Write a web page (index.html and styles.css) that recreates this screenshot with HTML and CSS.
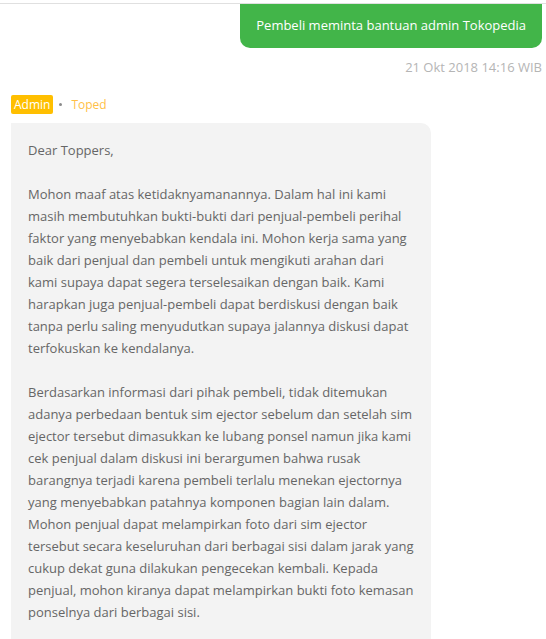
FILE: index.html
```html
<!DOCTYPE html>
<html>
	<head>
		<meta name="viewport" content="width=device-width, initial-scale=1.0">
		<title>Diskusi</title>
		<link rel="stylesheet" href="styles.css">
	</head>
	<body>
	<div class="top_line"></div>
	<div class="chat">
		<div class="msg_right">
			<div class="green_bubble">Pembeli meminta bantuan admin Tokopedia</div>
			<div class="time">21 Okt 2018 14:16 WIB</div>
		</div>

		<div class="msg_left">
			<div class="sender">
				<span class="badge">Admin</span>
				<span class="dot"></span>
				<span class="sender_name">Toped</span>
			</div>
			<div class="gray_bubble">
				<p>Dear Toppers,</p>
				<p>Mohon maaf atas ketidaknyamanannya. Dalam hal ini kami masih membutuhkan bukti-bukti dari penjual-pembeli perihal faktor yang menyebabkan kendala ini. Mohon kerja sama yang baik dari penjual dan pembeli untuk mengikuti arahan dari kami supaya dapat segera terselesaikan dengan baik. Kami harapkan juga penjual-pembeli dapat berdiskusi dengan baik tanpa perlu saling menyudutkan supaya jalannya diskusi dapat terfokuskan ke kendalanya.</p>
				<p>Berdasarkan informasi dari pihak pembeli, tidak ditemukan adanya perbedaan bentuk sim ejector sebelum dan setelah sim ejector tersebut dimasukkan ke lubang ponsel namun jika kami cek penjual dalam diskusi ini berargumen bahwa rusak barangnya terjadi karena pembeli terlalu menekan ejectornya yang menyebabkan patahnya komponen bagian lain dalam. Mohon penjual dapat melampirkan foto dari sim ejector tersebut secara keseluruhan dari berbagai sisi dalam jarak yang cukup dekat guna dilakukan pengecekan kembali. Kepada penjual, mohon kiranya dapat melampirkan bukti foto kemasan ponselnya dari berbagai sisi.</p>
			</div>
		</div>
	</div>
	</body>
</html>
```
FILE: styles.css
```css
	body
	{
		margin: 0;
		font-family: 'Open Sans', sans-serif;
		background: #ffffff;
	}
	.top_line
	{
		margin-top: 3px;
		height: 1px;
		background: #e0e0e0;
	}
	.chat
	{
		padding: 0 4px 0 11px;
	}
	.msg_right
	{
		display: flex;
		flex-direction: column;
		align-items: flex-end;
	}
	.green_bubble
	{
		background-color: #42b549;
		color: white;
		font-size: 13px;
		line-height: 20px;
		padding: 11px 16px 13px 16px;
		border-radius: 0 0 10px 10px;
	}
	.time
	{
		color: #b5b5b5;
		font-size: 13px;
		margin-top: 10px;
		line-height: 18px;
	}
	.msg_left
	{
		margin-top: 19px;
	}
	.sender
	{
		display: flex;
		align-items: center;
		font-size: 12px;
	}
	.badge
	{
		background-color: #ffbf00;
		color: white;
		padding: 0 3px;
		line-height: 19px;
		border-radius: 2px;
	}
	.dot
	{
		width: 3px;
		height: 3px;
		border-radius: 50%;
		background: #8a8a8a;
		margin: 0 9px 0 6px;
	}
	.sender_name
	{
		color: #ffbf47;
	}
	.gray_bubble
	{
		margin-top: 9px;
		width: 420px;
		box-sizing: border-box;
		background-color: #f3f3f3;
		border-radius: 0 10px 0 0;
		padding: 16px 17px 20px 17px;
		color: #666666;
		font-size: 13px;
		line-height: 22px;
	}
	.gray_bubble p
	{
		margin: 0 0 22px 0;
	}
```
